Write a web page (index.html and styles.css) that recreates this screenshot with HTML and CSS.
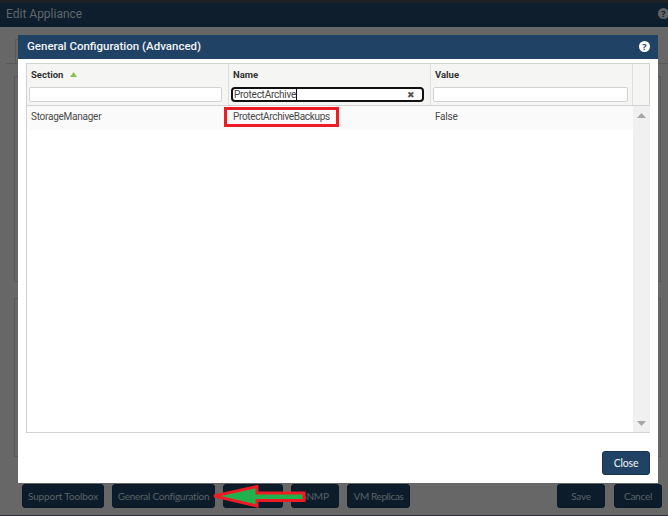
FILE: index.html
```html
<!DOCTYPE html>
<html lang="en">
<head>
<meta charset="utf-8">
<title>Edit Appliance</title>
<link rel="stylesheet" href="styles.css">
</head>
<body>
<div class="page">
  <header class="app-header">
    <h1 class="app-title">Edit Appliance</h1>
    <span class="app-help">?</span>
  </header>
  <main class="app-main">
    <div class="tabs"><div class="tab"></div></div>
    <section class="panel panel-top"></section>
    <section class="panel panel-bottom"></section>
  </main>
  <footer class="app-footer">
    <button class="btn btn-support">Support Toolbox</button>
    <button class="btn btn-general">General Configuration</button>
    <button class="btn btn-hidden">Tools</button>
    <button class="btn btn-snmp">SNMP</button>
    <button class="btn btn-vm">VM Replicas</button>
    <span class="spacer"></span>
    <button class="btn btn-save">Save</button>
    <button class="btn btn-cancel">Cancel</button>
  </footer>
</div>

<div class="modal">
  <div class="modal-head">
    <h2 class="modal-title">General Configuration (Advanced)</h2>
    <span class="modal-help">?</span>
  </div>
  <div class="grid">
    <div class="grid-head">
      <div class="col col-section">
        <div class="col-label">Section <svg class="sort" width="7" height="5" viewBox="0 0 7 5"><path d="M3.5 0 7 5H0z" fill="#8cc152"/></svg></div>
        <input class="filter" type="text" aria-label="Section filter">
      </div>
      <div class="col col-name">
        <div class="col-label">Name</div>
        <div class="filter filter-active"><span class="typed">ProtectArchive</span><span class="clear">✖</span></div>
      </div>
      <div class="col col-value">
        <div class="col-label">Value</div>
        <input class="filter" type="text" aria-label="Value filter">
      </div>
      <div class="col col-gutter"></div>
    </div>
    <div class="grid-body">
      <div class="rows">
        <div class="row">
          <div class="cell cell-section">StorageManager</div>
          <div class="cell cell-name">ProtectArchiveBackups</div>
          <div class="cell cell-value">False</div>
        </div>
      </div>
      <div class="scrollbar">
        <svg width="9" height="5" viewBox="0 0 9 5"><path d="M4.5 0 9 5H0z" fill="#a6a6a6"/></svg>
        <svg width="9" height="5" viewBox="0 0 9 5"><path d="M0 0h9L4.5 5z" fill="#a6a6a6"/></svg>
      </div>
    </div>
  </div>
  <div class="modal-foot"><button class="btn-close">Close</button></div>
</div>

<div class="mark-box"></div>
<svg class="mark-arrow" width="100" height="30" viewBox="0 0 100 30">
  <path d="M3 11 46 1.500V8H93V15.500H46V21z" fill="#22b14c" stroke="#ed1c24" stroke-width="3"/>
</svg>
</body>
</html>
```
FILE: styles.css
```css
* { box-sizing: border-box; }
html, body { margin: 0; padding: 0; }
body {
  width: 668px; height: 516px; overflow: hidden; position: relative;
  background: #676767;
  font-family: "Lato", sans-serif;
}
.page { height: 516px; display: flex; flex-direction: column; border-top: 3px solid #1b2127; border-bottom: 1px solid #30343a; }
.app-header {
  height: 24px; background: #0f1e2c; display: flex; align-items: center; justify-content: space-between;
  padding: 0 0 3px 6px; flex: none;
}
.app-title { margin: 0; font: 400 12px "Roboto", sans-serif; color: #5f666c; }
.app-help {
  width: 11px; height: 11px; border-radius: 50%; background: #5f6367; color: #0f1e2c; margin-right: -1px;
  font: 700 9px/11px "Noto Sans", sans-serif; text-align: center;
}
.app-main { flex: 1; min-height: 0; padding: 12px 7px 0 14px; position: relative; }
.tabs { height: 25px; border-bottom: 1px solid #595959; margin: 0 -7px 0 -8px; padding-left: 9px; }
.tab { width: 60px; height: 25px; border: 1px solid #595959; border-bottom: 0; }
.panel { border: 1px solid #585858; border-bottom-color: #585858; }
.panel-top { height: 206px; margin-top: 12px; }
.panel-bottom { height: 159px; margin-top: 16px; }
.app-footer { height: 31px; flex: none; display: flex; align-items: flex-start; padding: 0 6px 0 22px; gap: 8px; }
.btn {
  height: 24px; padding: 0; border: 1px solid #0c1824; border-radius: 3px; background: #0d1c2a; color: #5b6268;
  font: 400 10px "Lato", sans-serif; letter-spacing: -.25px; flex: none;
}
.btn-support { width: 82px; letter-spacing: -.1px; }
.btn-general { width: 103px; }
.btn-hidden { width: 60px; color: #0d1c2a; }
.btn-snmp { width: 48px; }
.btn-vm { width: 63px; letter-spacing: -.4px; }
.btn-save { width: 48px; }
.btn-cancel { width: 48px; margin-left: 1px; }
.spacer { flex: 1; }

.modal {
  position: absolute; left: 18px; top: 35px; width: 640px; height: 448px; background: #fff;
  display: flex; flex-direction: column;
}
.modal-head {
  height: 24px; flex: none; background: #204264; display: flex; align-items: center; justify-content: space-between;
  padding: 0 8px 2px 9px;
}
.modal-title { margin: 0; font: 500 11.500px "Roboto", sans-serif; color: #f2f5f8; }
.modal-help {
  width: 11px; height: 11px; border-radius: 50%; background: #fff; color: #204264;
  font: 700 9px/11px "Noto Sans", sans-serif; text-align: center;
}
.grid {
  margin: 4px 8px 0 8px; height: 370px; border: 1px solid #d2d2d2; display: flex; flex-direction: column; flex: none;
}
.grid-head { height: 42px; flex: none; display: flex; background: #f5f5f3; border-bottom: 1px solid #d2d2d2; }
.col { padding: 4px 2px 0; border-right: 1px solid #dedede; flex: none; }
.col-section { width: 202px; }
.col-name { width: 202px; }
.col-value { width: 202px; }
.col-gutter { width: 16px; border-right: 0; }
.col-label { font: 700 9.500px/13px "Roboto", sans-serif; color: #333; padding-left: 2px; height: 19px; }
.sort { margin-left: 4px; vertical-align: 1px; }
.filter {
  display: block; width: 193px; height: 15px; border: 1px solid #d2d2d2; border-radius: 2px; background: #fff; padding: 0; margin: 0;
}
.filter-active {
  border: 2px solid #111; border-radius: 4px; display: flex; justify-content: space-between; align-items: center;
  font: 400 10px "Roboto", sans-serif; letter-spacing: -.25px; color: #444; padding: 0 7px 0 1px; white-space: nowrap;
}
.typed { border-right: 1px solid #111; line-height: 11px; }
.clear { font-size: 9px; color: #555; }
.col-value .filter { width: 195px; }
.grid-body { flex: 1; display: flex; min-height: 0; }
.rows { flex: 1; }
.row { height: 24px; display: flex; background: #fafafa; align-items: flex-start; padding-top: 4px; color: #4a4a4a; font: 400 10px/13px "Roboto", sans-serif; letter-spacing: -.25px; }
.cell { width: 202px; padding-left: 4px; flex: none; }
.cell-name { padding-left: 4px; letter-spacing: -.33px; }
.scrollbar {
  width: 17px; flex: none; background: #f0f0f0; display: flex; flex-direction: column; justify-content: space-between; align-items: center;
  padding: 7px 0 6px;
}
.modal-foot { flex: 1; display: flex; justify-content: flex-end; align-items: flex-start; padding: 18px 8px 0 0; }
.btn-close {
  width: 48px; height: 24px; padding: 0; border: 1px solid #16324e; border-radius: 3px; background: #204264; color: #f2f5f8;
  font: 400 10.500px "Lato", sans-serif; letter-spacing: -.2px;
}
.mark-box { position: absolute; left: 224px; top: 107px; width: 115px; height: 20px; border: 3px solid #ed1c24; }
.mark-arrow { position: absolute; left: 211px; top: 485px; }
```
